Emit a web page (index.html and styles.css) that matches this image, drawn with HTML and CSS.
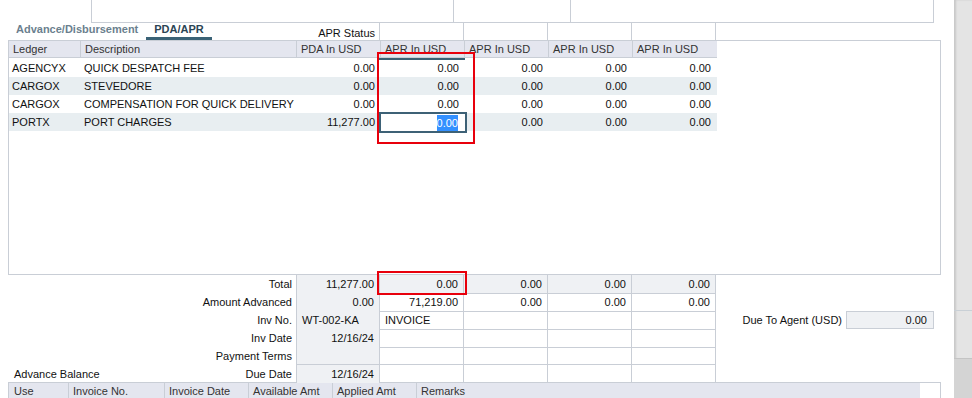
FILE: index.html
```html
<!DOCTYPE html>
<html lang="en">
<head>
    <meta charset="UTF-8">
    <meta name="viewport" content="width=device-width, initial-scale=1.0">
    <title>PDA / APR</title>
    <link rel="stylesheet" href="styles.css">
</head>
<body>
<div class="screen">
    <main class="page">
        <div class="topbox">
            <div></div>
            <div></div>
            <div></div>
        </div>

        <div class="tabrow">
            <nav class="tabs">
                <span class="tab">Advance/Disbursement</span>
                <span class="tab active">PDA/APR</span>
            </nav>
            <span class="status-label">APR Status</span>
            <div class="status-cells">
                <span></span><span></span><span></span><span></span>
            </div>
        </div>

        <section class="main-grid">
            <div class="row head">
                <span>Ledger</span>
                <span>Description</span>
                <span>PDA In USD</span>
                <span class="focus-col">APR In USD</span>
                <span>APR In USD</span>
                <span>APR In USD</span>
                <span>APR In USD</span>
            </div>
            <div class="rows">
                <div class="row">
                    <span class="c">AGENCYX</span>
                    <span class="c">QUICK DESPATCH FEE</span>
                    <span class="c num">0.00</span>
                    <span class="c num">0.00</span>
                    <span class="c num">0.00</span>
                    <span class="c num">0.00</span>
                    <span class="c num">0.00</span>
                </div>
                <div class="row alt">
                    <span class="c">CARGOX</span>
                    <span class="c">STEVEDORE</span>
                    <span class="c num">0.00</span>
                    <span class="c num">0.00</span>
                    <span class="c num">0.00</span>
                    <span class="c num">0.00</span>
                    <span class="c num">0.00</span>
                </div>
                <div class="row">
                    <span class="c">CARGOX</span>
                    <span class="c">COMPENSATION FOR QUICK DELIVERY</span>
                    <span class="c num">0.00</span>
                    <span class="c num">0.00</span>
                    <span class="c num">0.00</span>
                    <span class="c num">0.00</span>
                    <span class="c num">0.00</span>
                </div>
                <div class="row alt">
                    <span class="c">PORTX</span>
                    <span class="c">PORT CHARGES</span>
                    <span class="c num">11,277.00</span>
                    <span class="c num editing"><span class="editor"><span class="sel">0.00</span></span></span>
                    <span class="c num">0.00</span>
                    <span class="c num">0.00</span>
                    <span class="c num">0.00</span>
                </div>
            </div>
        </section>

        <section class="summary">
            <div class="sum-grid">
                <div class="srow total">
                    <span class="lbl">Total</span>
                    <span class="v num">11,277.00</span>
                    <span class="v num">0.00</span>
                    <span class="v num">0.00</span>
                    <span class="v num">0.00</span>
                    <span class="v num">0.00</span>
                </div>
                <div class="srow">
                    <span class="lbl">Amount Advanced</span>
                    <span class="v num">0.00</span>
                    <span class="v num">71,219.00</span>
                    <span class="v num">0.00</span>
                    <span class="v num">0.00</span>
                    <span class="v num">0.00</span>
                </div>
                <div class="srow">
                    <span class="lbl">Inv No.</span>
                    <span class="v">WT-002-KA</span>
                    <span class="v">INVOICE</span>
                    <span class="v"></span>
                    <span class="v"></span>
                    <span class="v"></span>
                </div>
                <div class="srow">
                    <span class="lbl">Inv Date</span>
                    <span class="v num">12/16/24</span>
                    <span class="v"></span>
                    <span class="v"></span>
                    <span class="v"></span>
                    <span class="v"></span>
                </div>
                <div class="srow">
                    <span class="lbl">Payment Terms</span>
                    <span class="v"></span>
                    <span class="v"></span>
                    <span class="v"></span>
                    <span class="v"></span>
                    <span class="v"></span>
                </div>
                <div class="srow last">
                    <span class="lbl split"><span>Advance Balance</span><span>Due Date</span></span>
                    <span class="v num">12/16/24</span>
                    <span class="v"></span>
                    <span class="v"></span>
                    <span class="v"></span>
                    <span class="v"></span>
                </div>
            </div>
            <div class="due">
                <label for="dueAgent">Due To Agent (USD)</label>
                <div class="due-box" id="dueAgent">0.00</div>
            </div>
        </section>

        <section class="adv">
            <div class="adv-head">
                <span>Use</span>
                <span>Invoice No.</span>
                <span>Invoice Date</span>
                <span>Available Amt</span>
                <span>Applied Amt</span>
                <span>Remarks</span>
            </div>
        </section>

        <div class="mark mark-col"></div>
        <div class="mark mark-total"></div>
    </main>

    <aside class="side">
        <div class="side-top"></div>
        <div class="side-mid"></div>
        <div class="side-bottom"></div>
    </aside>
</div>
</body>
</html>
```

FILE: styles.css
```css
* {
    box-sizing: border-box;
}

body {
    margin: 0;
    font-family: "Liberation Sans", Arial, sans-serif;
    font-size: 11px;
    color: #111;
    background-color: #fff;
}

.screen {
    display: flex;
    width: 972px;
    height: 398px;
    overflow: hidden;
}

.page {
    position: relative;
    flex: none;
    width: 954px;
    padding-left: 8px;
}

/* right neighbour panel */
.side {
    flex: 1;
    display: flex;
    flex-direction: column;
    background-color: #e4e4e4;
    box-shadow: inset 2px 0 2px rgba(0, 0, 0, 0.12);
}

.side-top {
    height: 311px;
    border-bottom: 1px solid #c9d0d6;
}

.side-mid {
    height: 47px;
}

.side-bottom {
    flex: 1;
    background-color: #d4d4d4;
    border-top: 1px solid #c4c4c4;
}

/* top header box, cut off */
.topbox {
    display: grid;
    grid-template-columns: 362px 117px 1fr;
    margin-left: 83px;
    width: 843px;
    height: 23px;
    border: 1px solid #c9ced6;
    border-top: none;
}

.topbox div {
    border-right: 1px solid #c9ced6;
}

.topbox div:last-child {
    border-right: none;
}

/* tabs + APR status */
.tabrow {
    display: flex;
    width: 708px;
    height: 17px;
}

.tabs {
    flex: 1;
    display: grid;
    grid-template-columns: 130px 66px;
    padding-left: 8px;
}

.tab {
    line-height: 12px;
    font-weight: bold;
    color: #6b7f8e;
    white-space: nowrap;
}

.tab.active {
    text-align: center;
    color: #2b4555;
    border-bottom: 3px solid #3a6276;
}

.status-label {
    align-self: flex-end;
    line-height: 13px;
    padding-right: 4px;
}

.status-cells {
    display: flex;
}

.status-cells span {
    width: 84px;
    border-right: 1px solid #c9ced6;
}

.status-cells span:first-child {
    width: 85px;
    border-left: 1px solid #c9ced6;
}

/* ledger grid */
.main-grid {
    width: 933px;
    height: 235px;
    border: 1px solid #c9ced6;
}

.row {
    display: grid;
    grid-template-columns: 72px 216px 84px 84px 84px 84px 84px;
    width: 708px;
    height: 18px;
    line-height: 19px;
}

.row.head {
    height: 17px;
    line-height: 17px;
    background-color: #e4e6ef;
    border-bottom: 1px solid #c9ced6;
    color: #333;
}

.row.head span {
    padding-left: 4px;
    border-right: 1px solid #c9ced6;
    white-space: nowrap;
}

.row.head span:last-child {
    border-right: none;
}

.focus-col {
    position: relative;
}

.focus-col::after {
    content: "";
    position: absolute;
    left: -2px;
    right: -1px;
    bottom: -2px;
    height: 2px;
    background-color: #3a6276;
}

.rows {
    padding-top: 1px;
}

.row.alt {
    background-color: #e8eef1;
}

.c {
    padding: 0 3px;
    white-space: nowrap;
    overflow: visible;
}

.num {
    text-align: right;
    padding-right: 6px;
}

.editing {
    position: relative;
}

.editor {
    position: absolute;
    left: -2px;
    top: -1px;
    width: 88px;
    height: 21px;
    padding: 1px 7px 0 0;
    border: 2px solid #3d6176;
    background-color: #fff;
    line-height: 16px;
    text-align: right;
}

.sel {
    display: inline-block;
    background-color: #3390ff;
    color: #fff;
}

/* totals block */
.summary {
    display: flex;
}

.sum-grid {
    width: 708px;
}

.srow {
    display: grid;
    grid-template-columns: 288px 84px 84px 84px 84px 84px;
    height: 18px;
    line-height: 18px;
}

.srow.last {
    height: 17px;
}

.lbl {
    text-align: right;
    padding-right: 4px;
    white-space: nowrap;
}

.lbl.split {
    display: flex;
    justify-content: space-between;
    padding-left: 6px;
}

.v {
    padding: 0 5px;
    border-right: 1px solid #c9ced6;
    border-bottom: 1px solid #c9ced6;
    white-space: nowrap;
}

.srow .v:nth-child(2) {
    border-left: 1px solid #c9ced6;
    background-color: #eff1f4;
}

.srow.total .v {
    background-color: #eff1f4;
}

.srow.last .v {
    border-bottom: none;
}

.v.num {
    padding-right: 5px;
}

.due {
    flex: 1;
    display: flex;
    justify-content: flex-end;
    align-items: flex-start;
    padding-top: 36px;
    padding-right: 20px;
}

.due label {
    line-height: 18px;
    margin-right: 4px;
}

.due-box {
    width: 88px;
    height: 18px;
    line-height: 16px;
    padding-right: 6px;
    text-align: right;
    background-color: #eff1f4;
    border: 1px solid #c9ced6;
}

/* advances table */
.adv {
    width: 933px;
    height: 20px;
    border: 1px solid #c9ced6;
    border-bottom: none;
}

.adv-head {
    display: grid;
    grid-template-columns: 60px 96px 84px 84px 84px 1fr;
    width: 911px;
    height: 16px;
    line-height: 17px;
    background-color: #e4e6ef;
    color: #333;
}

.adv-head span {
    padding-left: 4px;
    border-right: 1px solid #c9ced6;
}

.adv-head span:first-child {
    padding-left: 5px;
}

.adv-head span:last-child {
    border-right: none;
}

/* review marks */
.mark {
    position: absolute;
    border: 2px solid #e8000c;
}

.mark-col {
    left: 377px;
    top: 52px;
    width: 98px;
    height: 92px;
}

.mark-total {
    left: 377px;
    top: 271px;
    width: 90px;
    height: 24px;
}
```
